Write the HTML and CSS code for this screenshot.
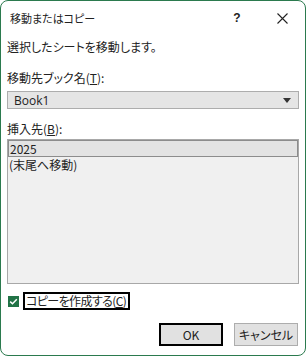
FILE: index.html
```html
<!DOCTYPE html>
<html lang="ja">
<head>
    <meta charset="UTF-8">
    <title>移動またはコピー</title>
    <link rel="stylesheet" href="styles.css">
</head>
<body>
    <div class="dialog">
        <div class="titlebar">
            <span class="title">移動またはコピー</span>
            <span class="help">?</span>
            <span class="close">
                <svg width="11" height="11" viewBox="0 0 11 11"><path d="M0.5 0.5 L10.5 10.5 M10.5 0.5 L0.5 10.5" stroke="#222" stroke-width="1.1" fill="none"/></svg>
            </span>
        </div>
        <div class="content">
            <p class="intro">選択したシートを移動します。</p>
            <label class="field-label">移動先ブック名(<u>T</u>):</label>
            <div class="combo">
                <span>Book1</span>
                <svg width="8" height="5" viewBox="0 0 8 5"><path d="M0 0 H8 L4 5 Z" fill="#333"/></svg>
            </div>
            <label class="field-label">挿入先(<u>B</u>):</label>
            <div class="listbox">
                <div class="item selected">2025</div>
                <div class="item">(末尾へ移動)</div>
            </div>
            <div class="check-row">
                <span class="checkbox">
                    <svg width="9" height="9" viewBox="0 0 9 9"><path d="M1.2 4.6 L3.5 6.8 L7.8 2.2" stroke="#fff" stroke-width="1.5" fill="none"/></svg>
                </span>
                <span class="check-label">コピーを作成する(<u>C</u>)</span>
            </div>
            <div class="buttons">
                <button class="btn default">OK</button>
                <button class="btn">キャンセル</button>
            </div>
        </div>
    </div>
</body>
</html>
```

FILE: styles.css
```css
body {
    margin: 0;
    background-color: #ffffff;
    font-family: "Noto Sans CJK JP", sans-serif;
    font-feature-settings: "palt";
    color: #222222;
}

.dialog {
    width: 306px;
    height: 356px;
    box-sizing: border-box;
    border: 1px solid #2b7a4e;
    border-radius: 8px;
    background-color: #ffffff;
    overflow: hidden;
}

.titlebar {
    height: 32px;
    display: flex;
    align-items: center;
    padding-left: 9px;
    font-size: 11px;
}

.title {
    flex: 1;
    margin-top: 1px;
}

.help {
    width: 44px;
    font-size: 12px;
    font-weight: bold;
    font-family: "Liberation Sans", sans-serif;
    text-align: center;
    margin-top: 2px;
}

.close {
    width: 46px;
    display: flex;
    justify-content: center;
    margin-top: 2px;
}

.content {
    padding: 0 6px;
    font-size: 12px;
}

.intro {
    margin: 6px 0 0;
    line-height: 16px;
}

.field-label {
    display: block;
    line-height: 16px;
    margin-top: 15px;
}

.combo {
    margin-top: 5px;
    height: 18px;
    box-sizing: border-box;
    border: 1px solid #adadad;
    background-color: #e5e5e5;
    display: flex;
    align-items: center;
    justify-content: space-between;
    padding: 0 7px 0 6px;
    font-family: "Open Sans", "Noto Sans CJK JP", sans-serif;
    font-size: 12px;
}

.combo + .field-label {
    margin-top: 12px;
}

.listbox {
    margin-top: 2px;
    height: 145px;
    box-sizing: border-box;
    border: 1px solid #a8a8a8;
    background-color: #f0f0f0;
}

.item {
    height: 16px;
    line-height: 15px;
    padding-left: 1px;
}

.item.selected {
    box-sizing: border-box;
    height: 17px;
    border: 1px solid #8c8c8c;
    background-color: #e3e3e3;
}

.check-row {
    margin-top: 8px;
    display: flex;
    align-items: center;
}

.checkbox {
    width: 11px;
    height: 11px;
    margin-left: 1px;
    background-color: #217346;
    display: flex;
    align-items: center;
    justify-content: center;
}

.check-label {
    margin-left: 4px;
    border: 2px solid #000000;
    padding: 0 2px 0 1px;
    line-height: 14px;
    letter-spacing: -0.6px;
}

.buttons {
    margin-top: 13px;
    display: flex;
    justify-content: flex-end;
    gap: 11px;
    padding-right: 1px;
}

.btn {
    width: 64px;
    height: 23px;
    box-sizing: border-box;
    border: 1px solid #adadad;
    background-color: #e1e1e1;
    font-family: "Noto Sans CJK JP", sans-serif;
    font-feature-settings: "palt";
    font-size: 12px;
    color: #222222;
    padding: 0;
}

.btn.default {
    border: 2px solid #000000;
}
```
